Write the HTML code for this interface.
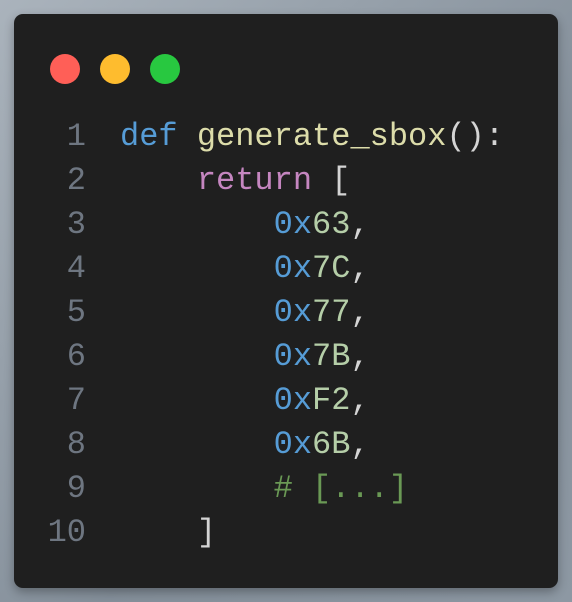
<!DOCTYPE html>
<html><head><style>
html,body{margin:0;padding:0;}
body{width:572px;height:602px;background:linear-gradient(135deg,#aab3bc,#848f9a 60%,#8d98a3);position:relative;overflow:hidden;}
.card{position:absolute;left:14px;top:14px;width:544px;height:574px;background:#1f1f1f;border-radius:9px;box-shadow:0 4px 10px rgba(0,0,0,.3);}
.dot{position:absolute;top:40px;width:30px;height:30px;border-radius:50%;}
.ln,.code{position:absolute;top:101px;font-family:"Liberation Mono",monospace;font-size:32px;line-height:44px;white-space:pre;}
.ln{left:0;width:72px;text-align:right;color:#6e7681;}
.code{left:106px;color:#d4d4d4;}
.k{color:#569cd6}.f{color:#dcdcaa}.r{color:#c586c0}.n{color:#b5cea8}.c{color:#6a9955}
</style></head><body>
<div class="card">
<div class="dot" style="left:36px;background:#ff5f57"></div>
<div class="dot" style="left:86px;background:#febc2e"></div>
<div class="dot" style="left:136px;background:#28c840"></div>
<div class="ln">1
2
3
4
5
6
7
8
9
10</div>
<div class="code"><span class="k">def</span> <span class="f">generate_sbox</span>():
    <span class="r">return</span> [
        <span class="k">0x</span><span class="n">63</span>,
        <span class="k">0x</span><span class="n">7C</span>,
        <span class="k">0x</span><span class="n">77</span>,
        <span class="k">0x</span><span class="n">7B</span>,
        <span class="k">0x</span><span class="n">F2</span>,
        <span class="k">0x</span><span class="n">6B</span>,
        <span class="c"># [...]</span>
    ]</div>
</div>
</body></html>
